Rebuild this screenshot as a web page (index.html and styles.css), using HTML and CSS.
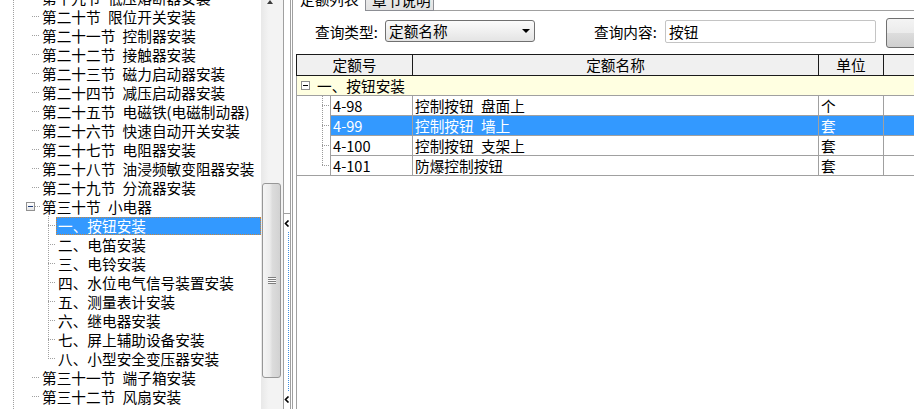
FILE: index.html
```html
<!DOCTYPE html>
<html lang="zh-CN">
<head>
<meta charset="utf-8">
<title>定额查询</title>
<link rel="stylesheet" href="styles.css">
</head>
<body>
<div class="app">
  <div class="left">
    <div class="tree">
      <div class="tree-in">
        <div class="row l1"><span class="hz"></span><span class="t">第十九节&ensp;低压熔断器安装</span></div>
        <div class="row l1"><span class="hz"></span><span class="t">第二十节&ensp;限位开关安装</span></div>
        <div class="row l1"><span class="hz"></span><span class="t">第二十一节&ensp;控制器安装</span></div>
        <div class="row l1"><span class="hz"></span><span class="t">第二十二节&ensp;接触器安装</span></div>
        <div class="row l1"><span class="hz"></span><span class="t">第二十三节&ensp;磁力启动器安装</span></div>
        <div class="row l1"><span class="hz"></span><span class="t">第二十四节&ensp;减压启动器安装</span></div>
        <div class="row l1"><span class="hz"></span><span class="t">第二十五节&ensp;电磁铁(电磁制动器)</span></div>
        <div class="row l1"><span class="hz"></span><span class="t">第二十六节&ensp;快速自动开关安装</span></div>
        <div class="row l1"><span class="hz"></span><span class="t">第二十七节&ensp;电阻器安装</span></div>
        <div class="row l1"><span class="hz"></span><span class="t">第二十八节&ensp;油浸频敏变阻器安装</span></div>
        <div class="row l1"><span class="hz"></span><span class="t">第二十九节&ensp;分流器安装</span></div>
        <div class="row exp"><span class="box"></span><span class="hz hz-s"></span><span class="t">第三十节&ensp;小电器</span></div>
        <div class="kids">
          <div class="row l2"><span class="hz"></span><span class="t sel">一、按钮安装</span></div>
          <div class="row l2"><span class="hz"></span><span class="t">二、电笛安装</span></div>
          <div class="row l2"><span class="hz"></span><span class="t">三、电铃安装</span></div>
          <div class="row l2"><span class="hz"></span><span class="t">四、水位电气信号装置安装</span></div>
          <div class="row l2"><span class="hz"></span><span class="t">五、测量表计安装</span></div>
          <div class="row l2"><span class="hz"></span><span class="t">六、继电器安装</span></div>
          <div class="row l2"><span class="hz"></span><span class="t">七、屏上辅助设备安装</span></div>
          <div class="row l2"><span class="hz"></span><span class="t">八、小型安全变压器安装</span></div>
        </div>
        <div class="row l1"><span class="hz"></span><span class="t">第三十一节&ensp;端子箱安装</span></div>
        <div class="row l1"><span class="hz"></span><span class="t">第三十二节&ensp;风扇安装</span></div>
      </div>
    </div>
    <div class="vscroll">
      <div class="sb-up"><span class="tri"></span></div>
      <div class="thumb"><span class="grip"></span></div>
    </div>
  </div>

  <div class="splitter">
    <div class="sp-btn">
      <svg class="chev" width="6" height="7" viewBox="0 0 6 7"><polyline points="4.5,0.5 1.5,3.5 4.5,6.5" fill="none" stroke="#000" stroke-width="1.6"/></svg>
      <div class="dots"></div>
      <svg class="chev" width="6" height="7" viewBox="0 0 6 7"><polyline points="4.5,0.5 1.5,3.5 4.5,6.5" fill="none" stroke="#000" stroke-width="1.6"/></svg>
    </div>
  </div>

  <div class="right">
    <div class="tabs">
      <div class="tab active">定额列表</div>
      <div class="tab other">章节说明</div>
      <div class="tab-fill"></div>
    </div>
    <div class="query">
      <span class="lbl">查询类型:</span>
      <div class="combo"><span>定额名称</span><span class="arrow"></span></div>
      <span class="lbl lbl2">查询内容:</span>
      <div class="input">按钮</div>
      <div class="btn"></div>
    </div>
    <div class="grid">
      <div class="ghead">
        <div class="th">定额号</div>
        <div class="th">定额名称</div>
        <div class="th">单位</div>
        <div class="th"></div>
      </div>
      <div class="gbody">
        <div class="grp"><span class="gbox"></span><span class="gtxt">一、按钮安装</span></div>
        <div class="tr"><div class="lead"></div><div class="cells"><div class="td">4-98</div><div class="td">控制按钮&ensp;盘面上</div><div class="td">个</div><div class="td"></div></div></div>
        <div class="tr on"><div class="lead"></div><div class="cells"><div class="td">4-99</div><div class="td">控制按钮&ensp;墙上</div><div class="td">套</div><div class="td"></div></div></div>
        <div class="tr"><div class="lead"></div><div class="cells"><div class="td">4-100</div><div class="td">控制按钮&ensp;支架上</div><div class="td">套</div><div class="td"></div></div></div>
        <div class="tr last"><div class="lead"></div><div class="cells"><div class="td">4-101</div><div class="td">防爆控制按钮</div><div class="td">套</div><div class="td"></div></div></div>
      </div>
    </div>
  </div>
</div>
</body>
</html>
```

FILE: styles.css
```css
* { box-sizing: border-box; margin: 0; padding: 0; }
html, body { width: 914px; height: 409px; overflow: hidden; background: #fff; }
body {
  font-family: "Noto Sans CJK SC", "Noto Sans", sans-serif;
  font-size: 14.67px;
  color: #000;
}
.app { display: flex; height: 409px; }

/* ---------- left tree panel ---------- */
.left {
  width: 284px;
  flex: none;
  display: flex;
  border-right: 1px solid #a0a0a0;
}
.tree {
  width: 261px;
  flex: none;
  overflow: hidden;
  background: repeating-linear-gradient(to bottom, #a0a0a0 0 1px, transparent 1px 2px) 13px 0 / 1px 100% no-repeat;
}
.tree-in { margin-top: -12px; }
.row {
  height: 19px;
  display: flex;
  align-items: center;
  white-space: nowrap;
}
.l1 { padding-left: 32px; }
.l2 { padding-left: 48px; }
.exp { padding-left: 26px; }
.hz {
  width: 8px;
  height: 1px;
  flex: none;
  background: repeating-linear-gradient(to right, #a0a0a0 0 1px, transparent 1px 2px);
}
.hz-s { width: 5px; }
.t {
  padding: 0 2px;
  height: 18px;
  line-height: 18px;
}
.sel {
  flex: 1;
  background: #3399ff;
  color: #fff;
  outline: 1px dotted #c8863c;
  outline-offset: -1px;
}
.box {
  width: 9px;
  height: 9px;
  flex: none;
  border: 1px solid #919191;
  background: linear-gradient(#ffffff, #e6e6e6);
  display: flex;
  align-items: center;
  justify-content: center;
}
.box::after {
  content: "";
  width: 5px;
  height: 1px;
  background: #1f3d7a;
}
.kids {
  background: repeating-linear-gradient(to bottom, #a0a0a0 0 1px, transparent 1px 2px) 48px 0 / 1px calc(100% - 9px) no-repeat;
}

/* scrollbar */
.vscroll {
  width: 22px;
  flex: none;
  display: flex;
  flex-direction: column;
  align-items: flex-start;
  background: linear-gradient(to right, #e8e8e8, #f3f3f3 35%, #f3f3f3);
}
.sb-up {
  height: 4px;
  display: flex;
  align-items: flex-end;
  padding-left: 6px;
}
.tri {
  width: 0;
  height: 0;
  border-left: 3px solid transparent;
  border-right: 3px solid transparent;
  border-bottom: 4px solid #3c3c3c;
}
.thumb {
  margin-top: 179px;
  margin-left: 1px;
  width: 19px;
  height: 195px;
  border: 1px solid #979797;
  border-radius: 3px;
  background: linear-gradient(to right, #f5f5f5, #ececec 40%, #dcdcdc 55%, #d2d2d2);
  display: flex;
  align-items: center;
  justify-content: center;
}
.grip {
  width: 8px;
  height: 7px;
  background: repeating-linear-gradient(to bottom, #7e7e7e 0 1px, #fafafa 1px 2px);
}

/* ---------- splitter ---------- */
.splitter {
  width: 7px;
  flex: none;
  border-right: 1px solid #a0a0a0;
  display: flex;
  flex-direction: column;
}
.sp-btn {
  margin-top: 213px;
  flex: 1;
  border-top: 1px solid #a0a0a0;
  display: flex;
  flex-direction: column;
  align-items: flex-start;
  padding: 6px 0 6px 0;
}
.chev { display: block; flex: none; }
.dots {
  flex: 1;
  width: 1px;
  margin: 5px 0 5px 4px;
  background: repeating-linear-gradient(to bottom, #3f8fe0 0 1px, transparent 1px 2px);
}

/* ---------- right panel ---------- */
.right {
  flex: 1;
  min-width: 0;
  margin-left: 1px;
  border-left: 1px solid #a0a0a0;
  display: flex;
  flex-direction: column;
  overflow: hidden;
}
.tabs {
  display: flex;
  height: 23px;
  margin-top: -12px;
  flex: none;
}
.tab {
  height: 23px;
  line-height: 22px;
  white-space: nowrap;
  flex: none;
}
.tab.active {
  width: 72px;
  padding-left: 7px;
  background: #fff;
}
.tab.other {
  width: 69px;
  padding-left: 6px;
  border: 1px solid #8c8e94;
  background: linear-gradient(#f2f2f2, #e2e2e2);
}
.tab-fill {
  flex: 1;
  border-bottom: 1px solid #a0a0a0;
}

.query {
  height: 40px;
  flex: none;
  display: flex;
  align-items: center;
  padding-left: 22px;
  white-space: nowrap;
}
.lbl { width: 70px; flex: none; }
.lbl2 { width: 71px; margin-left: 59px; }
.combo {
  width: 150px;
  height: 22px;
  flex: none;
  border: 1px solid #707070;
  border-radius: 3px;
  background: linear-gradient(#fbfbfb, #f0f0f0 50%, #e4e4e4);
  display: flex;
  align-items: center;
  justify-content: space-between;
  padding: 0 4px 0 3px;
  line-height: 20px;
}
.arrow {
  width: 0;
  height: 0;
  border-left: 4px solid transparent;
  border-right: 4px solid transparent;
  border-top: 4px solid #000;
}
.input {
  width: 211px;
  height: 23px;
  flex: none;
  border: 1px solid #c4c4c4;
  border-radius: 2px;
  padding-left: 3px;
  line-height: 21px;
  background: #fff;
}
.btn {
  width: 80px;
  height: 30px;
  flex: none;
  margin-left: 10px;
  margin-top: 4px;
  border: 1px solid #707070;
  border-radius: 3px;
  background: linear-gradient(#f4f4f4, #ebebeb 50%, #dddddd 50%, #cfcfcf);
}

/* grid */
.grid {
  flex: 1;
  min-width: 0;
  margin-top: 3px;
  margin-left: 3px;
  display: flex;
  flex-direction: column;
}
.ghead {
  display: grid;
  grid-template-columns: 116px 406px 65px 1fr;
  height: 22px;
  flex: none;
  border: 1px solid #1a1a1a;
  border-right: none;
  background: #f0f0f0;
}
.th {
  border-right: 1px solid #1a1a1a;
  text-align: center;
  line-height: 20px;
  white-space: nowrap;
}
.th:last-child { border-right: none; }
.gbody {
  flex: 1;
  border-left: 1px solid #a0a0a0;
}
.grp {
  height: 20px;
  display: flex;
  align-items: center;
  padding-left: 4px;
  background: #ffffe1;
  border-bottom: 1px solid #a0a0a0;
  white-space: nowrap;
}
.gbox {
  width: 9px;
  height: 9px;
  flex: none;
  margin-right: 7px;
  border: 1px solid #8f8f8f;
  background: #fff;
  display: flex;
  align-items: center;
  justify-content: center;
}
.gbox::after {
  content: "";
  width: 5px;
  height: 1px;
  background: #000;
}
.gtxt { line-height: 19px; }
.tr { height: 20px; display: flex; }
.lead {
  width: 33px;
  flex: none;
  background:
    repeating-linear-gradient(to right, #999 0 1px, transparent 1px 2px) 25px 9px / 8px 1px no-repeat,
    repeating-linear-gradient(to bottom, #999 0 1px, transparent 1px 2px) 25px 0 / 1px 100% no-repeat;
}
.tr.last .lead {
  border-bottom: 1px solid #a0a0a0;
  background:
    repeating-linear-gradient(to right, #999 0 1px, transparent 1px 2px) 25px 9px / 8px 1px no-repeat,
    repeating-linear-gradient(to bottom, #999 0 1px, transparent 1px 2px) 25px 0 / 1px 10px no-repeat;
}
.cells {
  flex: 1;
  display: grid;
  grid-template-columns: 82px 406px 65px 1fr;
  border-left: 1px solid #a0a0a0;
  border-bottom: 1px solid #a0a0a0;
}
.td {
  border-right: 1px solid #a0a0a0;
  padding-left: 2px;
  line-height: 19px;
  white-space: nowrap;
  overflow: hidden;
}
.td:last-child { border-right: none; }
.tr.on .cells { background: #3399ff; color: #fff; }
```
